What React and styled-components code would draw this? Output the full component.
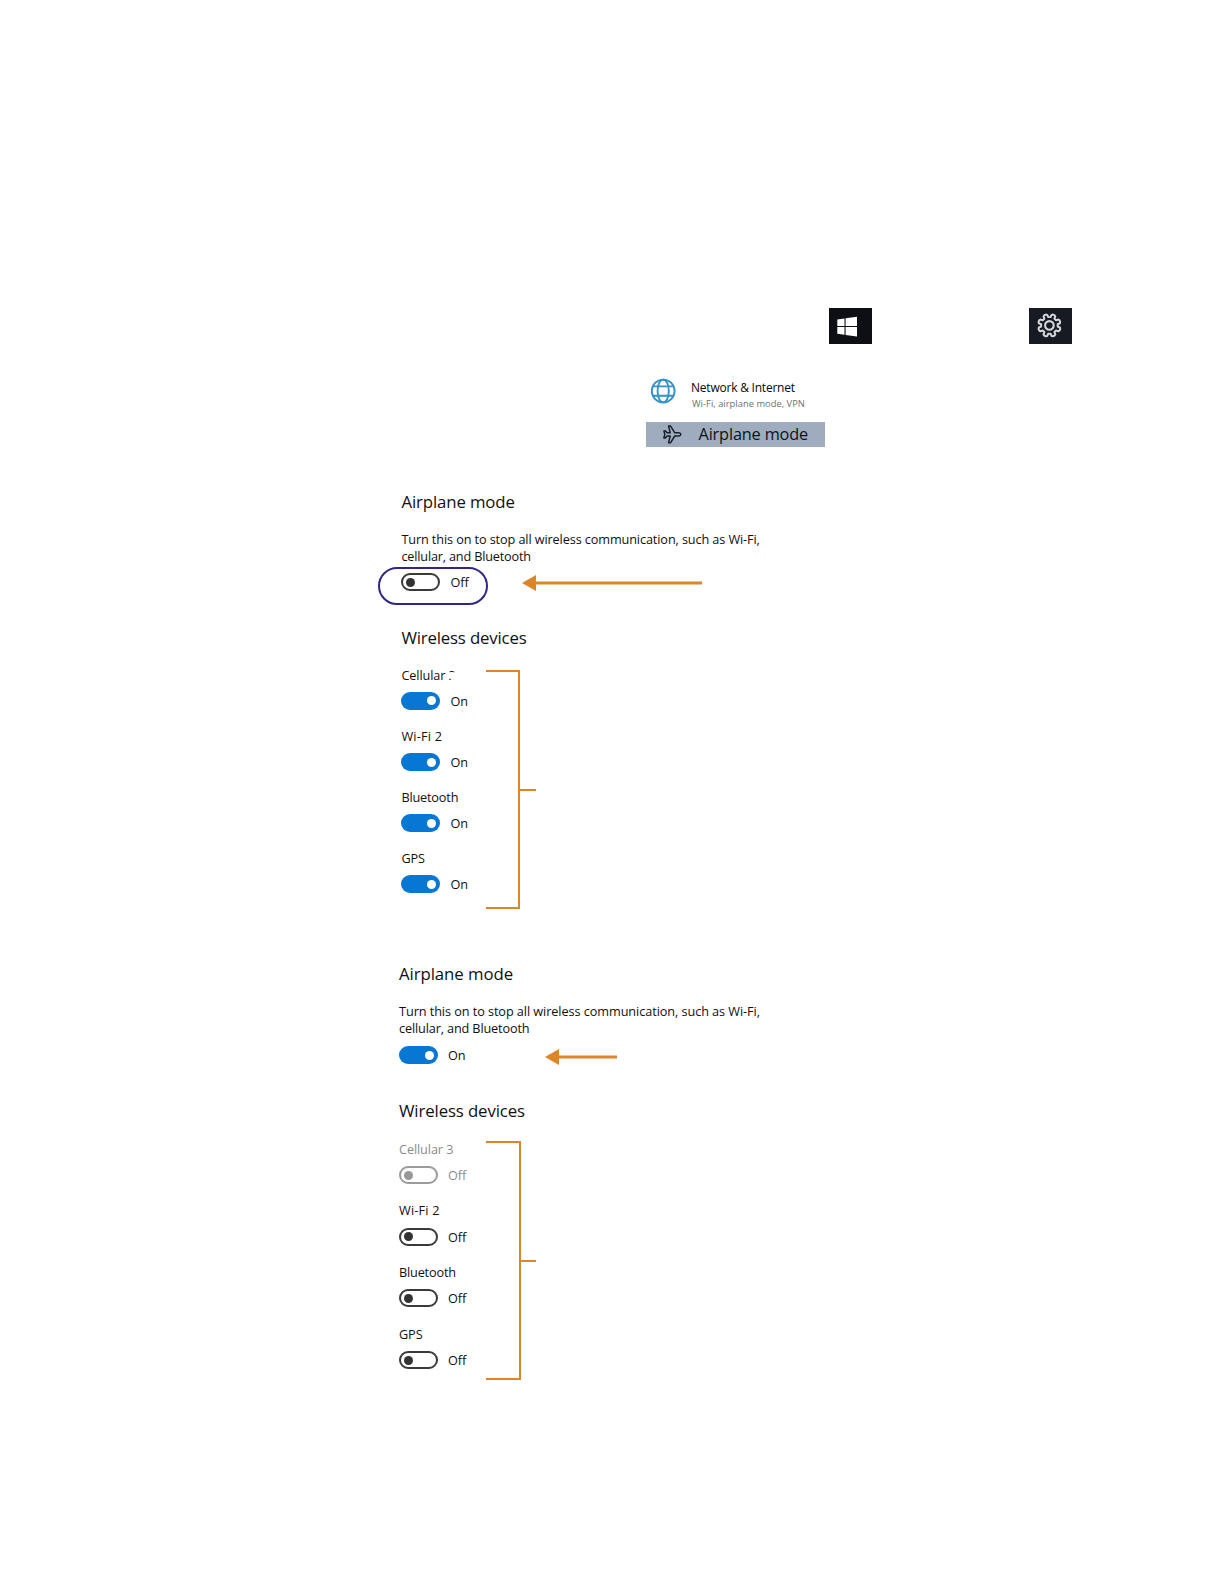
import React from "react";
import styled, { createGlobalStyle } from "styled-components";

const ORANGE = "#db8628";
const BLUE = "#0877d4";

const Global = createGlobalStyle`
  body { margin: 0; background: #fff; }
  * { box-sizing: border-box; }
`;

const Page = styled.main`
  width: 1224px;
  height: 1584px;
  padding-top: 308px;
  overflow: hidden;
  background: #fff;
  color: #101010;
  font-family: "Open Sans", "Noto Sans", sans-serif;
  display: flex;
  flex-direction: column;
`;

const TileRow = styled.div`
  display: flex;
  justify-content: space-between;
  width: 243px;
  height: 36px;
  margin-left: 829px;
`;

const Tile = styled.div`
  display: flex;
  width: 43px;
  height: 36px;
  background: ${(p) => p.$color};
`;

const Menu = styled.div`
  width: 180px;
  height: 69px;
  margin: 34px 0 0 646px;
  display: flex;
  flex-direction: column;
  justify-content: space-between;
`;

const NetworkItem = styled.div`
  display: flex;
  gap: 14px;
  padding-left: 4px;
`;

const NetworkText = styled.div`
  padding: 2px 0 0 1px;
`;

const Title = styled.div`
  font-size: 12px;
  line-height: 16px;
  letter-spacing: -0.22px;
  white-space: nowrap;
  color: #080808;
`;

const Subtitle = styled.div`
  margin: 2px 0 0 1px;
  font-size: 9.3px;
  line-height: 12px;
  letter-spacing: 0.04px;
  white-space: nowrap;
  color: #6f6f6f;
`;

const SelectedItem = styled.div`
  display: flex;
  align-items: center;
  gap: 17px;
  width: 179px;
  height: 25px;
  margin-top: 7px;
  padding-left: 16.5px;
  flex: none;
  background: #9eacbd;
  color: #0b131b;
  font-size: 16.3px;
  line-height: 25px;
  letter-spacing: -0.15px;
  white-space: nowrap;
`;

const Panel = styled.section`
  margin: ${(p) => p.$top}px 0 0 ${(p) => p.$left}px;
  display: flex;
  flex-direction: column;
`;

const Heading = styled.h2`
  margin: ${(p) => p.$top || 0}px 0 0;
  font-size: 16.8px;
  font-weight: 400;
  line-height: 24px;
  letter-spacing: ${(p) => p.$spacing}px;
  white-space: nowrap;
`;

const Paragraph = styled.p`
  margin: 17px 0 0;
  font-size: 12.7px;
  line-height: 17px;
  white-space: nowrap;
`;

const Line = styled.span`
  display: block;
  letter-spacing: ${(p) => p.$spacing}px;
`;

const SwitchRow = styled.div`
  position: relative;
  display: flex;
  align-items: center;
  margin-top: ${(p) => p.$top}px;
  height: 18px;
  opacity: ${(p) => (p.$disabled ? 0.5 : 1)};
`;

const Track = styled.span`
  display: flex;
  flex: none;
  align-items: center;
  justify-content: ${(p) => (p.$on ? "flex-end" : "flex-start")};
  width: 39px;
  height: 18px;
  padding: 0 ${(p) => (p.$on ? 4 : 2.5)}px;
  border: ${(p) => (p.$on ? "0" : "2px solid #3a3a3a")};
  border-radius: 9px;
  background: ${(p) => (p.$on ? BLUE : "#fff")};
`;

const Knob = styled.span`
  width: 9px;
  height: 9px;
  border-radius: 50%;
  background: ${(p) => (p.$on ? "#fff" : "#333")};
`;

const State = styled.span`
  flex: none;
  width: 24px;
  margin-left: 10px;
  font-size: 12.7px;
  line-height: 18px;
`;

const Ring = styled.span`
  position: absolute;
  left: -23px;
  top: -6px;
  width: 110px;
  height: 38px;
  border: 2px solid #30268a;
  border-radius: 19px;
`;

const Arrow = styled.svg`
  display: block;
  flex: none;
  margin-left: ${(p) => p.$left}px;
  margin-top: ${(p) => p.$shift}px;
`;

const Devices = styled.div`
  display: flex;
  margin-top: ${(p) => p.$top}px;
`;

const DeviceList = styled.div`
  display: flex;
  flex-direction: column;
  width: ${(p) => p.$width}px;
`;

const Device = styled.div`
  height: ${(p) => p.$pitch}px;
`;

const Label = styled.div`
  font-size: 12.7px;
  line-height: 18px;
  letter-spacing: ${(p) => p.$spacing}px;
  white-space: nowrap;
  opacity: ${(p) => (p.$disabled ? 0.5 : 1)};
`;

const PartialGlyph = styled.span`
  clip-path: polygon(0 0, 100% 0, 100% 6.2px, 0 6.2px, 0 12px, 2.2px 12px, 2.2px 100%, 0 100%);
  display: inline-block;
`;

const Bracket = styled.div`
  display: flex;
  margin-top: ${(p) => p.$top}px;
`;

const BracketBody = styled.div`
  width: ${(p) => p.$width}px;
  height: ${(p) => p.$height}px;
  border: 2px solid ${ORANGE};
  border-left: 0;
`;

const BracketTick = styled.div`
  width: ${(p) => p.$width}px;
  height: 2px;
  margin-top: 119px;
  background: ${ORANGE};
`;

const gearPath = (() => {
  const points = [];
  for (let i = 0; i < 8; i += 1) {
    const mid = 22.5 + i * 45;
    [
      [-14.5, 8.8],
      [-11, 11.3],
      [-4, 12],
      [4, 12],
      [11, 11.3],
      [14.5, 8.8],
    ].forEach(([offset, radius]) => {
      const a = ((mid + offset) * Math.PI) / 180;
      points.push(`${(radius * Math.cos(a)).toFixed(2)} ${(radius * Math.sin(a)).toFixed(2)}`);
    });
  }
  return `M${points.join("L")}Z`;
})();

function WindowsLogo() {
  return (
    <svg width="43" height="36" viewBox="1 0 43 36" fill="#fff">
      <path d="M9.3 11.4 16.5 10.4V17.9H9.3ZM17.6 10.2 29 8.8V17.9H17.6ZM9.3 19H16.5V26.8L9.3 25.8ZM17.6 19H29V28.4L17.6 27Z" />
    </svg>
  );
}

function GearIcon() {
  return (
    <svg width="43" height="36" viewBox="-20.4 -17.4 43 36" fill="none" stroke="#d4d6da" strokeWidth="2.1" strokeLinejoin="round">
      <path d={gearPath} transform="scale(.95)" />
      <circle r="4.3" />
    </svg>
  );
}

function GlobeIcon() {
  return (
    <svg width="26" height="26" viewBox="-13.2 -13 26 26" fill="none" stroke="#3492c8" strokeWidth="1.9">
      <circle r="11.4" />
      <ellipse rx="5.6" ry="11.4" />
      <path d="M-10.6-4.6H10.6M-10.6 4.8H10.6" />
    </svg>
  );
}

function PlaneIcon() {
  return (
    <svg width="19" height="19" viewBox="0 0 19 19" fill="none" stroke="#17202a" strokeWidth="1.5" strokeLinejoin="round">
      <path d="M17.9 9.4Q17.6 8 15.8 7.8H11.8L7.6 1.1H5.6L7.2 7.8H4.2L2.3 5.9H.9L1.8 9.4.9 12.9H2.3L4.2 11H7.2L5.6 17.7H7.6L11.8 11H15.8Q17.6 10.8 17.9 9.4Z" />
    </svg>
  );
}

function Pointer({ length, left, shift }) {
  return (
    <Arrow width={length} height="16" viewBox={`0 0 ${length} 16`} fill={ORANGE} $left={left} $shift={shift}>
      <path d={`M0 8 14 0V6.5H${length}V9.5H14V16Z`} />
    </Arrow>
  );
}

function Switch({ on, disabled, top, ring, children }) {
  return (
    <SwitchRow $top={top} $disabled={disabled}>
      <Track $on={on}>
        <Knob $on={on} />
      </Track>
      <State>{on ? "On" : "Off"}</State>
      {ring && <Ring />}
      {children}
    </SwitchRow>
  );
}

const names = [
  { name: "Cellular 3", spacing: -0.1 },
  { name: "Wi-Fi 2", spacing: 0.2 },
  { name: "Bluetooth", spacing: -0.17 },
  { name: "GPS", spacing: -0.1 },
];

function DeviceGroup({ on, pitch, top, listWidth, bracketTop, bracketWidth, switchGap, firstPartial, firstDisabled }) {
  return (
    <Devices $top={top}>
      <DeviceList $width={listWidth}>
        {names.map(({ name, spacing }, i) => {
          const disabled = firstDisabled && i === 0;
          return (
            <Device key={name} $pitch={pitch}>
              <Label $spacing={spacing} $disabled={disabled}>
                {firstPartial && i === 0 ? (
                  <>
                    Cellular <PartialGlyph>3</PartialGlyph>
                  </>
                ) : (
                  name
                )}
              </Label>
              <Switch on={on} top={switchGap} disabled={disabled} />
            </Device>
          );
        })}
      </DeviceList>
      <Bracket $top={bracketTop}>
        <BracketBody $width={bracketWidth} $height={239} />
        <BracketTick $width={50 - bracketWidth} />
      </Bracket>
    </Devices>
  );
}

function Description({ spacing }) {
  return (
    <Paragraph>
      <Line $spacing={spacing}>Turn this on to stop all wireless communication, such as Wi-Fi,</Line>
      <Line $spacing={spacing - 0.07}>cellular, and Bluetooth</Line>
    </Paragraph>
  );
}

export default function App() {
  return (
    <>
      <Global />
      <Page>
        <TileRow>
          <Tile $color="#0d0f14">
            <WindowsLogo />
          </Tile>
          <Tile $color="#181a23">
            <GearIcon />
          </Tile>
        </TileRow>

        <Menu>
          <NetworkItem>
            <GlobeIcon />
            <NetworkText>
              <Title>Network &amp; Internet</Title>
              <Subtitle>Wi-Fi, airplane mode, VPN</Subtitle>
            </NetworkText>
          </NetworkItem>
          <SelectedItem>
            <PlaneIcon />
            Airplane mode
          </SelectedItem>
        </Menu>

        <Panel $top={43.2} $left={401.4}>
          <Heading $spacing={-0.12}>Airplane mode</Heading>
          <Description spacing={-0.11} />
          <Switch top={8.2} ring>
            <Pointer length={180} left={47.6} shift={2} />
          </Switch>
          <Heading $top={34.8} $spacing={-0.17}>
            Wireless devices
          </Heading>
          <DeviceGroup
            on
            firstPartial
            top={15.8}
            pitch={61.1}
            listWidth={84.6}
            bracketTop={3.8}
            bracketWidth={34}
            switchGap={8}
          />
        </Panel>

        <Panel $top={51.8} $left={399}>
          <Heading $spacing={-0.07}>Airplane mode</Heading>
          <Description spacing={-0.07} />
          <Switch on top={9.2}>
            <Pointer length={72} left={73} shift={3} />
          </Switch>
          <Heading $top={34.2} $spacing={-0.12}>
            Wireless devices
          </Heading>
          <DeviceGroup
            firstDisabled
            top={17.2}
            pitch={61.7}
            listWidth={87}
            bracketTop={1}
            bracketWidth={35}
            switchGap={8.4}
          />
        </Panel>
      </Page>
    </>
  );
}
